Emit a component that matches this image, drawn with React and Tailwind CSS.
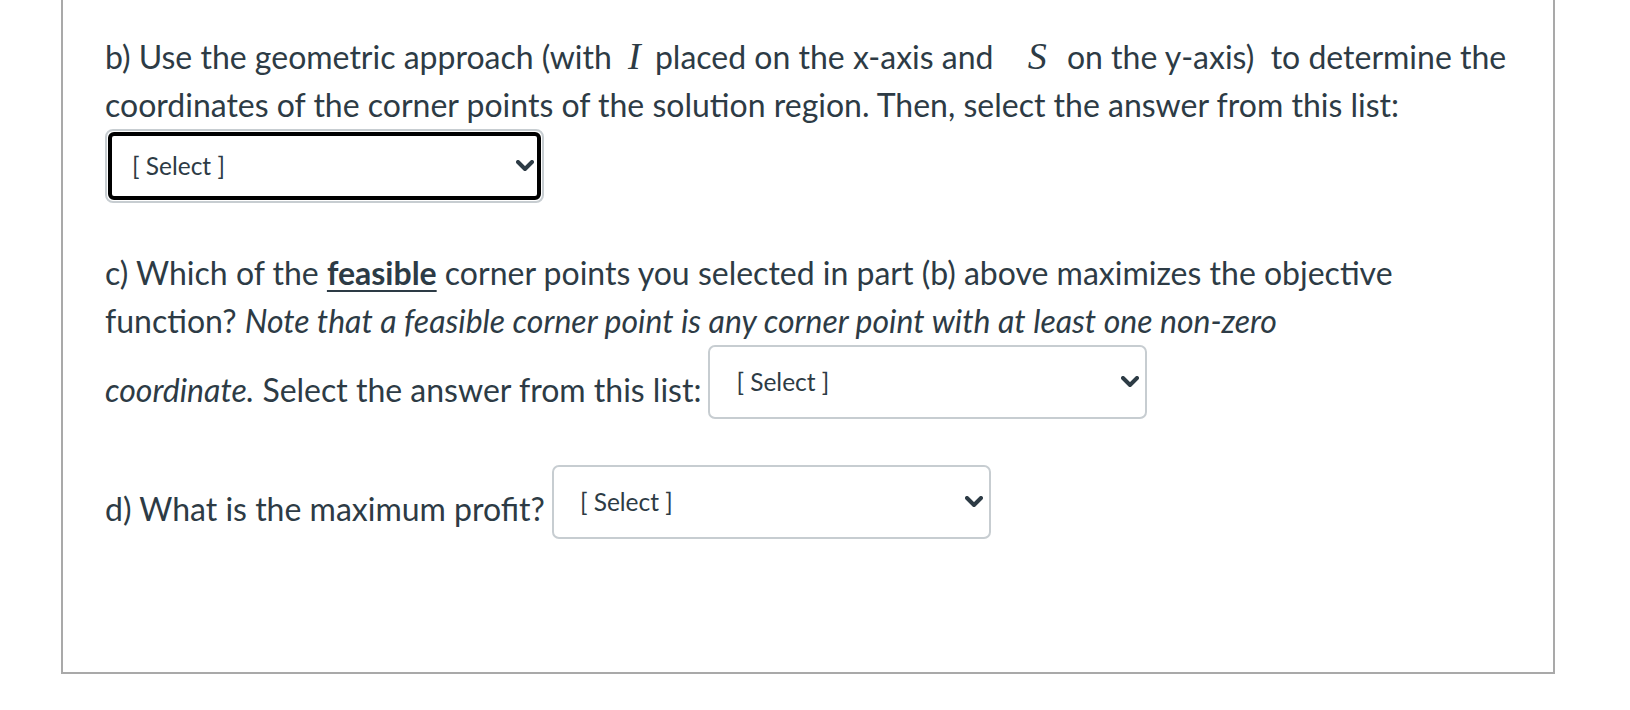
import React from "react";

function Chevron() {
  return (
    <svg
      className="pointer-events-none absolute right-[8px] top-1/2 -translate-y-1/2"
      width="18"
      height="12"
      viewBox="0 0 18 12"
      fill="none"
    >
      <polyline
        points="2,2 9,9 16,2"
        stroke="#2d3b45"
        strokeWidth="4"
        strokeLinecap="round"
        strokeLinejoin="round"
      />
    </svg>
  );
}

function Dropdown({ focused = false, className = "" }) {
  if (focused) {
    return (
      <div className={"relative w-[439px] h-[74px] rounded-[8px] border-2 border-[#c7cdd1] p-[1px] " + className}>
        <select className="block w-full h-full appearance-none rounded-[6px] border-4 border-black bg-white pl-[20px] text-[24.5px] text-[#2d3b45] outline-none font-['Lato']">
          <option>[ Select ]</option>
        </select>
        <Chevron />
      </div>
    );
  }
  return (
    <div className={"relative w-[439px] h-[74px] shrink-0 " + className}>
      <select className="block w-full h-full appearance-none rounded-[7px] border-2 border-[#c7cdd1] bg-white pl-[26px] text-[24.5px] text-[#2d3b45] outline-none font-['Lato']">
        <option>[ Select ]</option>
      </select>
      <Chevron />
    </div>
  );
}

function MathVar({ children, className = "" }) {
  return (
    <span className={"font-['Liberation_Serif'] italic text-[38px] leading-none " + className}>{children}</span>
  );
}

export default function App() {
  return (
    <div className="w-[1630px] h-[710px] bg-white">
      <div className="ml-[61px] w-[1494px] h-[674px] border-x-2 border-b-2 border-[#a9a9a9] pl-[42px] pt-[33px] font-['Lato'] text-[32px] leading-[48px] text-[#2d3b45]">
        <p className="whitespace-nowrap">
          b) Use the geometric approach (with <MathVar className="ml-[8px] mr-[6px]">I</MathVar> placed on the x-axis and{" "}
          <MathVar className="ml-[26px] mr-[12px]">S</MathVar> on the y-axis)&nbsp; to determine the
          <br />
          coordinates of the corner points of the solution region. Then, select the answer from this list:
        </p>
        <Dropdown focused />
        <p className="mt-[46px] whitespace-nowrap">
          c) Which of the <strong className="font-bold underline underline-offset-[5px] decoration-2">feasible</strong> corner points you selected in part (b) above maximizes the objective
          <br />
          function? <em>Note that a feasible corner point is any corner point with at least one non-zero</em>
        </p>
        <div className="flex items-start">
          <span className="mt-[21px] whitespace-nowrap">
            <em>coordinate.</em> Select the answer from this list:
          </span>
          <Dropdown className="ml-[7px]" />
        </div>
        <div className="mt-[46px] flex items-start">
          <span className="mt-[20px] whitespace-nowrap">d) What is the maximum profit?</span>
          <Dropdown className="ml-[7px]" />
        </div>
      </div>
    </div>
  );
}
